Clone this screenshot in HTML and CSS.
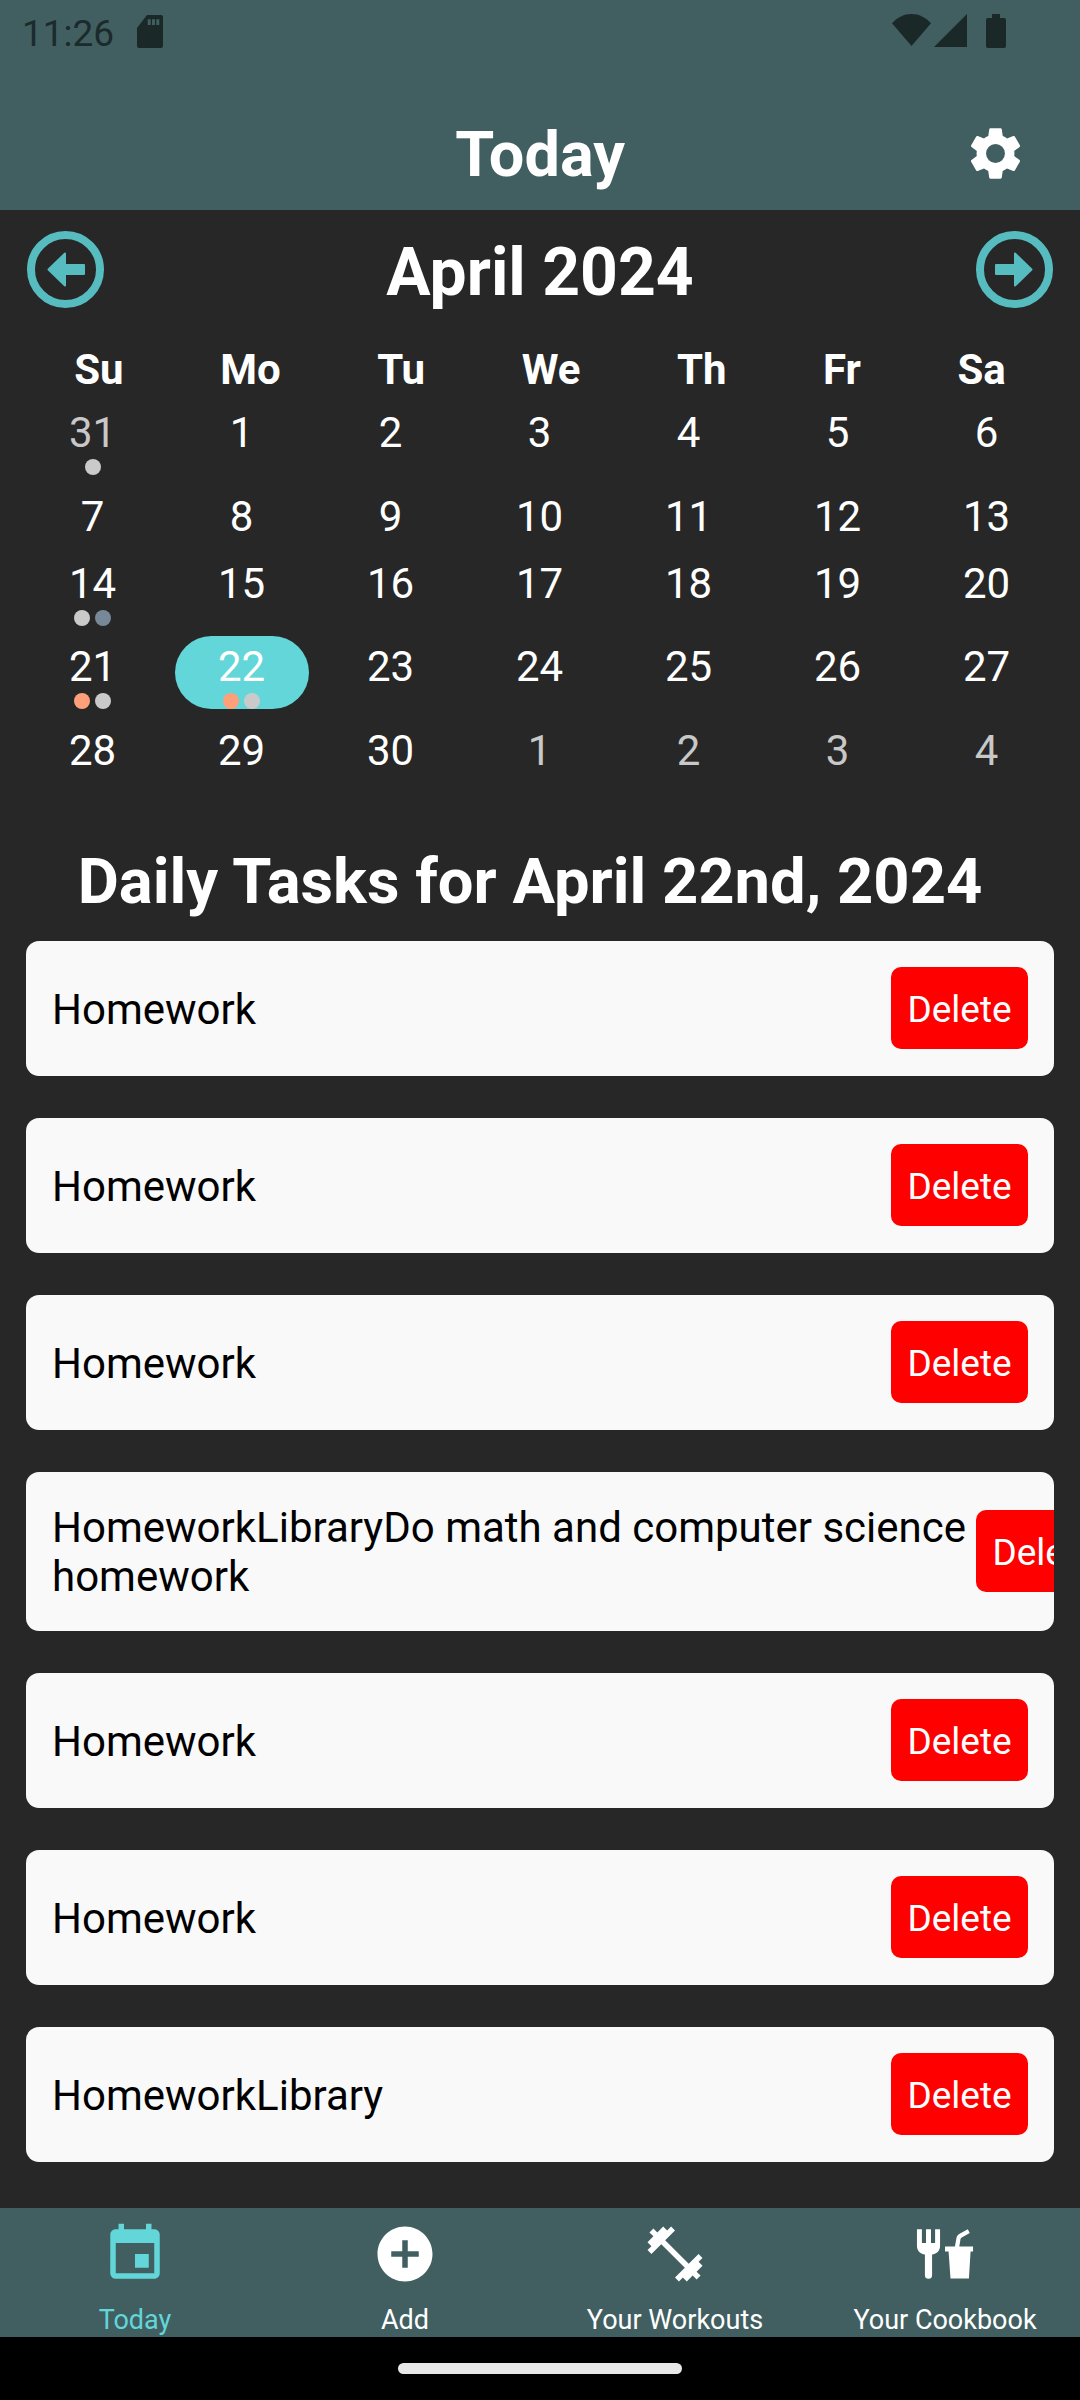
FILE: index.html
```html
<!DOCTYPE html>
<html lang="en">
<head>
<meta charset="utf-8">
<title>Today</title>
<link rel="stylesheet" href="styles.css">
</head>
<body>
<div class="app">
  <header class="top">
    <div class="status">
      <div class="status-left">
        <span class="clock">11:26</span>
        <svg class="ic-sd" viewBox="0 0 26 33"><path fill-rule="evenodd" d="M10 0H24a2 2 0 0 1 2 2V31a2 2 0 0 1-2 2H2a2 2 0 0 1-2-2V13ZM10.700 4.300v5.700h3V4.300ZM15 4.300v5.700h3V4.300ZM19.300 4.300v5.700h3V4.300Z"/></svg>
      </div>
      <div class="status-right">
        <svg class="ic-wifi" viewBox="0 0 39 32"><path d="M19.500 32L0 9.300C5.500 3.300 12 0 19.500 0S33.500 3.300 39 9.300Z"/></svg>
        <svg class="ic-signal" viewBox="0 0 33 33"><path d="M33 0V33H0Z"/></svg>
        <svg class="ic-batt" viewBox="0 0 20 34"><path d="M6 0H14V4H18a2 2 0 0 1 2 2V32a2 2 0 0 1-2 2H2a2 2 0 0 1-2-2V6a2 2 0 0 1 2-2H6Z"/></svg>
      </div>
    </div>
    <div class="title-row">
      <h1 class="title">Today</h1>
      <svg class="gear" viewBox="0 0 24 24"><path fill="#fff" d="M19.140 12.940c.040-.300.060-.610.060-.940 0-.320-.020-.640-.070-.940l2.030-1.580a.49.49 0 0 0 .120-.610l-1.920-3.320a.488.488 0 0 0-.590-.220l-2.390.960c-.500-.380-1.030-.700-1.620-.940l-.360-2.540a.484.484 0 0 0-.480-.410h-3.840c-.240 0-.430.170-.470.410l-.360 2.540c-.590.240-1.130.570-1.620.940l-2.390-.960c-.220-.080-.470 0-.590.220L2.740 8.870c-.120.210-.080.470.120.610l2.030 1.580c-.050.300-.090.630-.090.940s.020.640.070.940l-2.030 1.580a.49.49 0 0 0-.120.610l1.920 3.320c.120.220.370.290.590.220l2.390-.960c.500.380 1.030.700 1.620.940l.360 2.540c.050.240.240.410.480.410h3.840c.240 0 .440-.170.470-.410l.360-2.540c.590-.240 1.130-.560 1.620-.940l2.390.960c.220.080.470 0 .590-.220l1.920-3.320c.120-.220.070-.470-.120-.610l-2.010-1.580zM12 15.600A3.610 3.610 0 0 1 8.400 12 3.610 3.610 0 0 1 12 8.400a3.610 3.610 0 0 1 3.600 3.600 3.610 3.610 0 0 1-3.600 3.600z"/></svg>
    </div>
  </header>

  <main class="content">
    <section class="calendar">
      <div class="month-row">
        <svg class="arrow" viewBox="0 0 77 77"><circle class="ring" cx="38.500" cy="38.500" r="34.500"/><path class="head" d="M21.500 38.500L38 22.500V34H57V43H38V54.500Z"/></svg>
        <h2 class="month">April 2024</h2>
        <svg class="arrow" viewBox="0 0 77 77"><circle class="ring" cx="38.500" cy="38.500" r="34.500"/><path class="head" d="M55.500 38.500L39 22.500V34H20V43H39V54.500Z"/></svg>
      </div>
      <div class="weekdays">
        <span>Su</span><span>Mo</span><span>Tu</span><span>We</span><span>Th</span><span>Fr</span><span>Sa</span>
      </div>
      <div class="days">
        <div class="day muted"><span class="num">31</span><div class="dots"><i class="dot grey"></i></div></div>
        <div class="day"><span class="num">1</span></div>
        <div class="day"><span class="num">2</span></div>
        <div class="day"><span class="num">3</span></div>
        <div class="day"><span class="num">4</span></div>
        <div class="day"><span class="num">5</span></div>
        <div class="day"><span class="num">6</span></div>
        <div class="day"><span class="num">7</span></div>
        <div class="day"><span class="num">8</span></div>
        <div class="day"><span class="num">9</span></div>
        <div class="day"><span class="num">10</span></div>
        <div class="day"><span class="num">11</span></div>
        <div class="day"><span class="num">12</span></div>
        <div class="day"><span class="num">13</span></div>
        <div class="day"><span class="num">14</span><div class="dots"><i class="dot grey"></i><i class="dot slate"></i></div></div>
        <div class="day"><span class="num">15</span></div>
        <div class="day"><span class="num">16</span></div>
        <div class="day"><span class="num">17</span></div>
        <div class="day"><span class="num">18</span></div>
        <div class="day"><span class="num">19</span></div>
        <div class="day"><span class="num">20</span></div>
        <div class="day"><span class="num">21</span><div class="dots"><i class="dot salmon"></i><i class="dot grey"></i></div></div>
        <div class="day selected"><span class="num">22</span><div class="dots"><i class="dot salmon"></i><i class="dot grey"></i></div></div>
        <div class="day"><span class="num">23</span></div>
        <div class="day"><span class="num">24</span></div>
        <div class="day"><span class="num">25</span></div>
        <div class="day"><span class="num">26</span></div>
        <div class="day"><span class="num">27</span></div>
        <div class="day"><span class="num">28</span></div>
        <div class="day"><span class="num">29</span></div>
        <div class="day"><span class="num">30</span></div>
        <div class="day muted"><span class="num">1</span></div>
        <div class="day muted"><span class="num">2</span></div>
        <div class="day muted"><span class="num">3</span></div>
        <div class="day muted"><span class="num">4</span></div>
      </div>
    </section>

    <h2 class="tasks-title">Daily Tasks for April 22nd, 2024</h2>
    <section class="tasks">
      <div class="task"><span class="task-name">Homework</span><button class="del">Delete</button></div>
      <div class="task"><span class="task-name">Homework</span><button class="del">Delete</button></div>
      <div class="task"><span class="task-name">Homework</span><button class="del">Delete</button></div>
      <div class="task"><span class="task-name long">HomeworkLibraryDo math and computer science homework</span><button class="del">Delete</button></div>
      <div class="task"><span class="task-name">Homework</span><button class="del">Delete</button></div>
      <div class="task"><span class="task-name">Homework</span><button class="del">Delete</button></div>
      <div class="task"><span class="task-name">HomeworkLibrary</span><button class="del">Delete</button></div>
    </section>
  </main>

  <nav class="tabs">
    <div class="tab active">
      <svg class="tab-ic" viewBox="0 0 24 24"><path fill="#62d6d8" d="M17 12h-5v5h5v-5zM16 1v2H8V1H6v2H5c-1.110 0-1.990.900-1.990 2L3 19a2 2 0 0 0 2 2h14c1.100 0 2-.900 2-2V5c0-1.100-.900-2-2-2h-1V1h-2zm3 18H5V8h14v11z"/></svg>
      <span class="tab-label">Today</span>
    </div>
    <div class="tab">
      <svg class="tab-ic" viewBox="0 0 24 24"><path fill="#fff" d="M12 2C6.480 2 2 6.480 2 12s4.480 10 10 10 10-4.480 10-10S17.520 2 12 2zm5 11h-4v4h-2v-4H7v-2h4V7h2v4h4v2z"/></svg>
      <span class="tab-label">Add</span>
    </div>
    <div class="tab">
      <svg class="tab-ic" viewBox="0 0 24 24"><path fill="#fff" d="M20.570 14.860L22 13.430 20.570 12 17 15.570 8.430 7 12 3.430 10.570 2 9.140 3.430 7.710 2 5.570 4.140 4.140 2.710 2.710 4.140l1.430 1.430L2 7.710l1.430 1.430L2 10.570 3.430 12 7 8.430 15.570 17 12 20.570 13.430 22l1.430-1.430L16.290 22l2.140-2.140 1.430 1.430 1.430-1.430-1.430-1.430L22 16.290z"/></svg>
      <span class="tab-label">Your Workouts</span>
    </div>
    <div class="tab">
      <svg class="tab-ic" viewBox="0 0 24 24"><path fill="#fff" d="M1.800 3h1.800v5h1.500V3h1.800v5h1.500V3h1.800v6c0 1.800-1.100 2.900-2.900 3.200v7.500a1.300 1.300 0 0 1-2.600 0v-7.500C2.900 11.900 1.800 10.800 1.800 9V3ZM12 9.300h3.600l.500-2.800c.100-.900.500-1.500 1.200-1.900L20.300 3l.700 1.400L18.100 6c-.300.200-.500.400-.500.800l-.400 2.500h5v1.800h-.900l-.600 9.800H14l-.700-9.800H12V9.300Z"/></svg>
      <span class="tab-label">Your Cookbook</span>
    </div>
  </nav>

  <div class="gesture"><span class="handle"></span></div>
</div>
</body>
</html>
```

FILE: styles.css
```css
* { box-sizing: border-box; }
html, body { margin: 0; padding: 0; }
body { width: 1080px; height: 2400px; overflow: hidden; font-family: Roboto, "Noto Sans", sans-serif; background: #000; }
.app { width: 1080px; height: 2400px; display: flex; flex-direction: column; }

.top { flex: 0 0 210px; background: #415f61; display: flex; flex-direction: column; }
.status { height: 63px; padding: 0 74px 0 22px; display: flex; justify-content: space-between; align-items: flex-start; }
.status-left { display: flex; align-items: flex-start; gap: 23px; padding-top: 15px; }
.clock { margin-top: 2px; font-size: 37px; line-height: 33px; color: #1b2a2b; }
.ic-sd { width: 26px; height: 33px; fill: #1a2828; display: block; }
.status-right { display: flex; align-items: flex-start; padding-top: 14px; }
.ic-wifi { width: 39px; height: 32px; fill: #1a2828; margin-right: 3px; display: block; }
.ic-signal { width: 33px; height: 33px; fill: #1a2828; margin-right: 19px; display: block; }
.ic-batt { width: 20px; height: 34px; fill: #1a2828; display: block; }

.title-row { flex: 1; position: relative; display: flex; justify-content: center; }
.title { margin: 58px 0 0; font-size: 63px; line-height: 68px; font-weight: 700; color: #fff; }
.gear { position: absolute; right: 53px; top: 59px; width: 63px; height: 63px; }

.content { flex: 1 1 0; min-height: 0; background: #272727; display: flex; flex-direction: column; }
.month-row { height: 120px; padding: 21px 27px 0; display: flex; justify-content: space-between; align-items: flex-start; }
.arrow { width: 77px; height: 77px; display: block; }
.ring { fill: none; stroke: #56bcc0; stroke-width: 8; }
.head { fill: #56bcc0; stroke: #56bcc0; stroke-width: 2; stroke-linejoin: round; }
.month { margin: 2px 0 0; font-size: 66px; line-height: 80px; font-weight: 700; color: #fff; }

.weekdays { margin: 17px 26px 0; height: 46px; display: flex; justify-content: space-around; align-items: center; font-size: 42px; line-height: 46px; font-weight: 700; color: #fff; }

.days { margin-top: 11px; padding: 0 18px; display: grid; grid-template-columns: repeat(7, 149px); grid-template-rows: 84px 67px 83px 84px 70px; }
.day { position: relative; display: flex; flex-direction: column; align-items: center; padding-top: 4px; color: #fff; }
.num { font-size: 42px; line-height: 50px; }
.muted { color: #c8c8c8; }
.selected::before { content: ""; position: absolute; left: 8px; right: 7.500px; top: -2px; height: 73px; border-radius: 36.500px; background: #62d6d8; }
.selected .num, .selected .dots { position: relative; }
.dots { display: flex; gap: 5px; margin-top: 1px; }
.dot { display: block; width: 16px; height: 16px; border-radius: 50%; }
.grey { background: #cacaca; }
.slate { background: #778899; }
.salmon { background: #ffa07a; }

.tasks-title { margin: 53px 0 0; padding-right: 20px; text-align: center; font-size: 63.300px; line-height: 72px; font-weight: 700; color: #fff; }
.tasks { margin-top: 24px; padding: 0 26px; display: flex; flex-direction: column; gap: 42px; }
.task { min-height: 135px; padding: 26px; background: #f9f9f9; border-radius: 13px; display: flex; align-items: center; justify-content: space-between; gap: 10px; overflow: hidden; }
.task-name { margin-top: 2px; font-size: 42px; line-height: 49px; color: #000; }
.long { flex: 0 0 auto; width: 914px; margin: 4.500px 0; }
.del { flex: 0 0 auto; width: 137px; height: 82px; margin-bottom: 1px; padding: 2px 0 0; border: 0; border-radius: 10px; background: #f00; color: #fff; font: 37px Roboto, sans-serif; }

.tabs { flex: 0 0 129px; background: #415f61; display: flex; overflow: hidden; }
.tab { flex: 1; display: flex; flex-direction: column; align-items: center; padding-top: 13px; color: #fff; }
.tab.active { color: #62d6d8; }
.tab-ic { width: 66px; height: 66px; display: block; }
.tab-label { margin-top: 17px; font-size: 27px; line-height: 32px; white-space: nowrap; }

.gesture { flex: 0 0 63px; background: #000; display: flex; justify-content: center; padding-top: 26px; }
.handle { width: 284px; height: 11px; border-radius: 6px; background: #e8e8e8; }
```
